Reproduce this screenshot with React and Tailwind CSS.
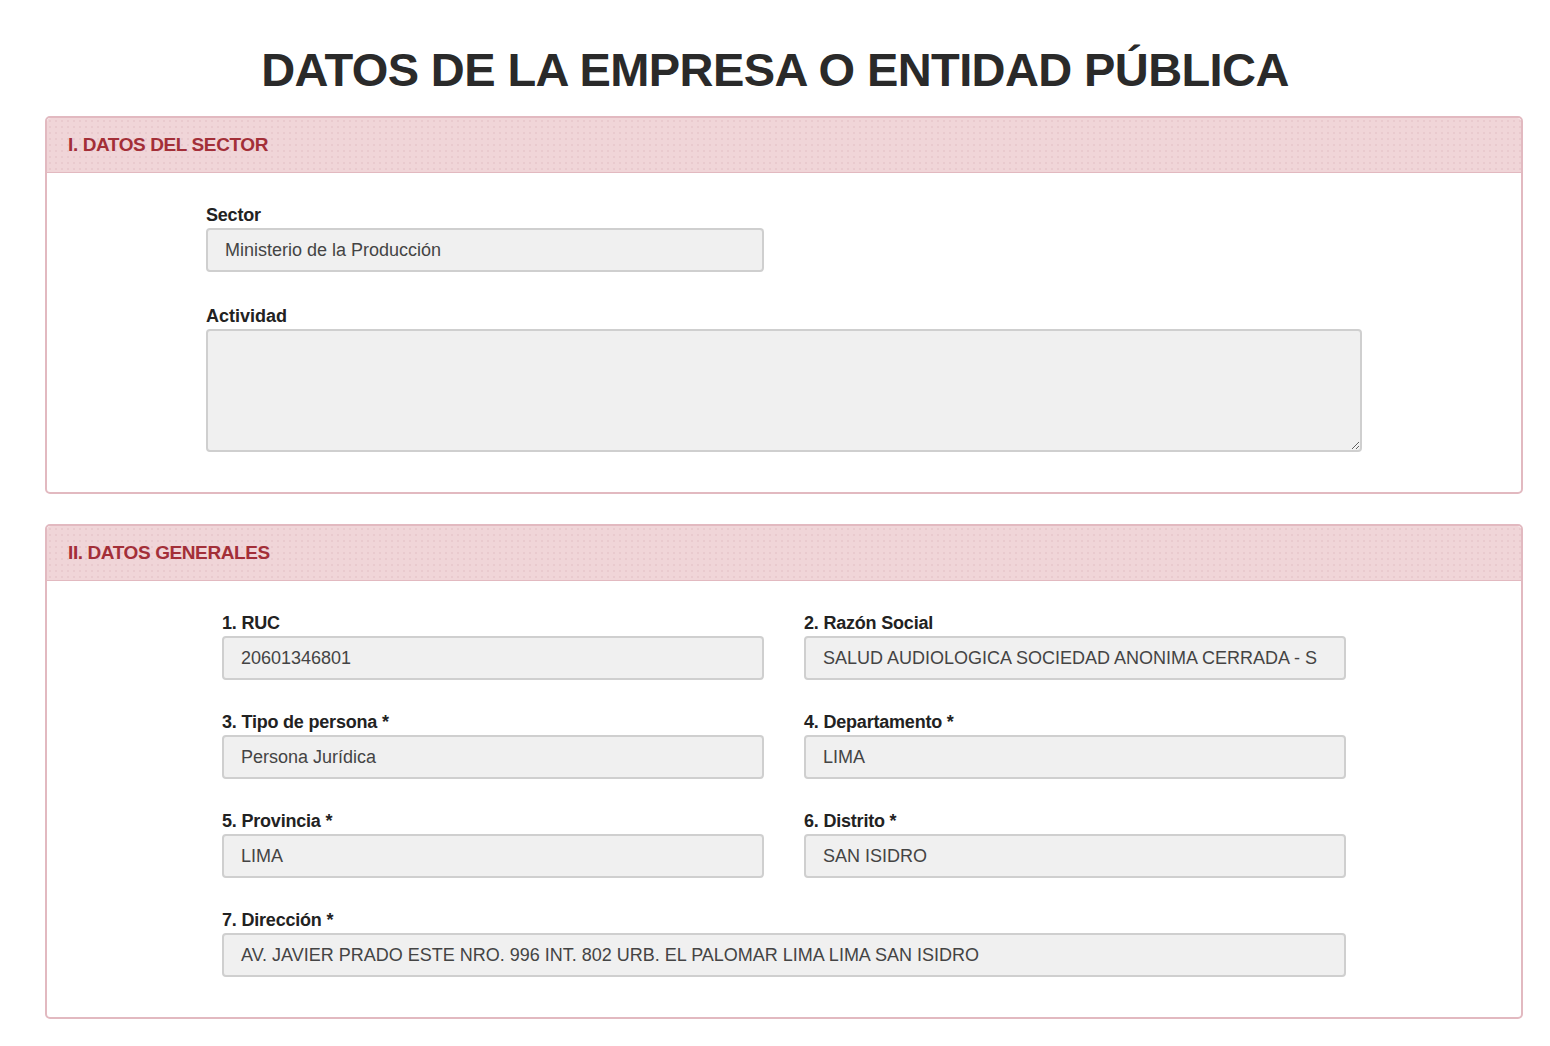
import React from "react";

const font = { fontFamily: '"Liberation Sans", Arial, sans-serif' };

const Header = ({ children }) => (
  <div className="h-[55px] flex items-center px-[21px] bg-[#f0d5d8] border-b border-[#e2b9c0] rounded-t-[4px] bg-[radial-gradient(#e9cace_1px,transparent_1px)] [background-size:6px_6px]">
    <h2 className="text-[19px] font-bold text-[#a32f38] tracking-[-0.4px]">{children}</h2>
  </div>
);

const Field = ({ label, value, className = "" }) => (
  <div className={className}>
    <label className="block text-[18px] font-bold text-[#222] leading-[20px] mb-[3px] tracking-[-0.2px]">{label}</label>
    <div className="h-[44px] flex items-center px-[17px] bg-[#f0f0f0] border-2 border-[#cfcfcf] rounded-[4px] text-[18px] text-[#444] whitespace-nowrap overflow-hidden">
      {value}
    </div>
  </div>
);

export default function App() {
  return (
    <div style={font} className="bg-white min-h-screen px-[45px] pt-[40px] pb-[20px]">
      <h1 className="text-center text-[47px] font-bold text-[#2a2a2a] leading-[60px] mb-[16px] tracking-[-0.6px]">
        DATOS DE LA EMPRESA O ENTIDAD PÚBLICA
      </h1>

      <section className="border-2 border-[#e2b9c0] rounded-[5px] w-[1478px]">
        <Header>I. DATOS DEL SECTOR</Header>
        <div className="pl-[159px] pt-[32px] pb-[40px]">
          <Field label="Sector" value="Ministerio de la Producción" className="w-[558px]" />
          <div className="mt-[34px] w-[1156px]">
            <label className="block text-[18px] font-bold text-[#222] leading-[20px] mb-[3px]">Actividad</label>
            <textarea readOnly className="block w-full h-[123px] bg-[#f0f0f0] border-2 border-[#cfcfcf] rounded-[4px] outline-none" />
          </div>
        </div>
      </section>

      <section className="mt-[30px] border-2 border-[#e2b9c0] rounded-[5px] w-[1478px]">
        <Header>II. DATOS GENERALES</Header>
        <div className="pl-[175px] pt-[32px] pb-[40px] w-[1299px] box-content">
          <div className="grid grid-cols-[542px_542px] gap-x-[40px] gap-y-[32px]">
            <Field label="1. RUC" value="20601346801" />
            <Field label="2. Razón Social" value="SALUD AUDIOLOGICA SOCIEDAD ANONIMA CERRADA - S" />
            <Field label="3. Tipo de persona *" value="Persona Jurídica" />
            <Field label="4. Departamento *" value="LIMA" />
            <Field label="5. Provincia *" value="LIMA" />
            <Field label="6. Distrito *" value="SAN ISIDRO" />
            <Field label="7. Dirección *" value="AV. JAVIER PRADO ESTE NRO. 996 INT. 802 URB. EL PALOMAR LIMA LIMA SAN ISIDRO" className="col-span-2" />
          </div>
        </div>
      </section>
    </div>
  );
}
